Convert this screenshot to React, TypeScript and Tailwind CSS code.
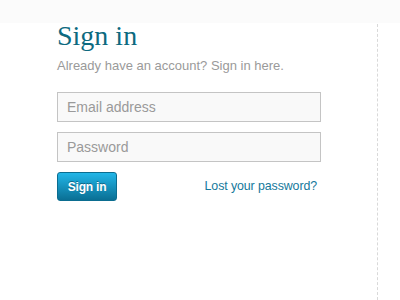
import React from "react";

export default function App() {
  return (
    <div
      className="w-[400px] h-[300px] flex bg-[linear-gradient(to_bottom,#fbfbfb_0px,#fbfbfb_23px,#ffffff_23px)] overflow-hidden"
      style={{ fontFamily: '"Liberation Sans", Arial, sans-serif' }}
    >
      <div className="w-[377px] shrink-0 pl-[57px] pt-[22px]">
        <h1
          className="text-[28px] leading-[28px] text-[#0d6a80] font-normal"
          style={{ fontFamily: '"Liberation Serif", "Times New Roman", serif' }}
        >
          Sign in
        </h1>
        <p className="mt-[8px] text-[13px] leading-[16px] text-[#9a9a9a]">
          Already have an account? Sign in here.
        </p>
        <div className="w-[264px] mt-[18px] flex flex-col gap-[10px]">
          <input
            type="text"
            placeholder="Email address"
            className="h-[30px] w-full border border-[#c4c4c4] bg-[#f9f9f9] px-[9px] text-[14px] text-[#555] placeholder:text-[#9a9a9a] outline-none"
          />
          <input
            type="password"
            placeholder="Password"
            className="h-[30px] w-full border border-[#c4c4c4] bg-[#f9f9f9] px-[9px] text-[14px] text-[#555] placeholder:text-[#9a9a9a] outline-none"
          />
          <div className="flex items-center justify-between pr-[4px]">
            <button
              className="w-[60px] h-[29px] rounded-[3px] border border-[#0b6d90] bg-[linear-gradient(to_bottom,#22b6e8,#0a6f94)] text-white font-bold text-[12px] tracking-[-0.2px] [text-shadow:0_-1px_0_rgba(0,0,0,0.35)]"
            >
              Sign in
            </button>
            <a href="#" className="text-[12.4px] text-[#15799b] tracking-[-0.1px]">
              Lost your password?
            </a>
          </div>
        </div>
      </div>
      <div className="w-px mt-[24px] border-l border-dashed border-[#d9d9d9]" />
    </div>
  );
}
